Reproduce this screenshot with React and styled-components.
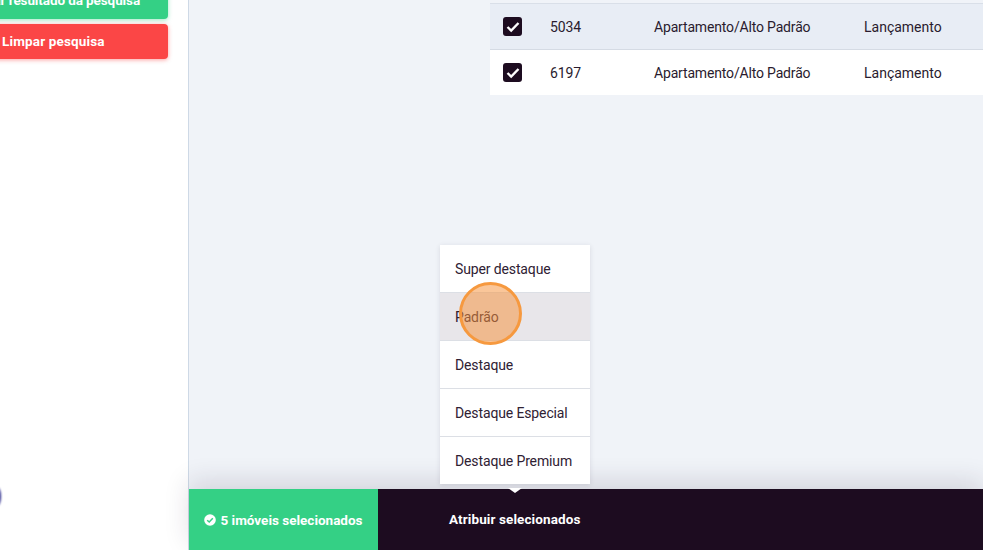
import React from "react";
import styled, { createGlobalStyle } from "styled-components";

const Global = createGlobalStyle`
  html, body { margin: 0; padding: 0; background: #f0f3f8; }
  * { box-sizing: border-box; }
`;
const Page = styled.div`
  width: 983px; height: 550px; display: flex; overflow: hidden; position: relative;
  font-family: Roboto, "Liberation Sans", sans-serif; color: #1d0c20; background: #f0f3f8;
`;
const Sidebar = styled.aside`
  width: 189px; flex: none; background: #fff; border-right: 1px solid #ced9e6;
  padding: 0 20px 0 0; display: flex; flex-direction: column; gap: 5px; position: relative; overflow: hidden;
`;
const SideButton = styled.button`
  width: ${p => p.$w}px; margin-left: ${p => 168 - p.$w}px; margin-top: ${p => p.$mt || 0}px; height: 35px; border: 0; border-radius: 4px;
  background: ${p => p.$bg}; color: #fff; font: 700 13.5px Roboto, sans-serif; text-align: left;
  letter-spacing: ${p => p.$ls || "0"}; padding: ${p => p.$pad}; box-shadow: 0 1px 4px ${p => p.$shadow};
  white-space: nowrap; flex: none; overflow: hidden;
`;
const Main = styled.main`
  flex: 1; display: flex; flex-direction: column; position: relative; min-width: 0;
`;
const Content = styled.section`
  flex: 1; padding: 3px 0 0 301px; min-height: 0;
`;
const Table = styled.div`
  border-top: 1px solid #d9dfe8; display: flex; flex-direction: column;
`;
const Row = styled.div`
  height: ${p => p.$h}px; display: grid; grid-template-columns: 60px 104px 210px 1fr; align-items: center;
  background: ${p => p.$bg}; border-bottom: ${p => p.$line ? "1px solid #d5dbe4" : "0"};
  font-size: 14px; color: #2a1b2e;
`;
const CheckCell = styled.span`
  padding-left: 13px; display: flex;
`;
const Check = styled.span`
  width: 19px; height: 19px; border-radius: 3px; background: #1d0c20; display: flex;
  align-items: center; justify-content: center;
`;
const Cell = styled.span`
  letter-spacing: ${p => p.$ls || "0"}; white-space: nowrap;
`;
const Bar = styled.footer`
  height: 61px; flex: none; display: flex; background: #1d0c20; position: relative;
  box-shadow: 0 -8px 26px rgba(40, 30, 60, .14);
`;
const Count = styled.div`
  width: 189px; background: #34d085; color: #fff; display: flex; align-items: center;
  justify-content: center; gap: 4px; font-size: 13.5px; font-weight: 700; padding-top: 1px;
`;
const Assign = styled.div`
  color: #fff; font-size: 13.5px; font-weight: 700; margin-left: 71px; display: flex; align-items: center;
  padding-bottom: 2px; letter-spacing: 0.1px;
`;
const Menu = styled.ul`
  position: absolute; left: 251px; top: 245px; width: 150px; margin: 0; padding: 0; list-style: none;
  background: #fff; box-shadow: 0 1px 5px rgba(40, 30, 60, .12); z-index: 3;
`;
const MenuItem = styled.li`
  height: ${p => p.$last ? 47 : 48}px; padding: 0 0 0 15px; display: flex; align-items: center; font-size: 14px;
  letter-spacing: -0.13px;
  background: ${p => p.$active ? "#e8e6ea" : "#fff"};
  border-bottom: ${p => p.$last ? "0" : "1px solid #dcdfe5"};
  color: #2f2133;
`;
const Arrow = styled.span`
  position: absolute; left: 319px; top: 488px; width: 0; height: 0; z-index: 4;
  border-left: 7px solid transparent; border-right: 7px solid transparent; border-top: 5px solid #fff;
`;
const Pointer = styled.span`
  position: absolute; left: 270px; top: 282px; width: 63px; height: 63px; border-radius: 50%;
  background: rgba(246, 146, 60, .52); border: 3px solid #f6993f; z-index: 5;
`;
const Blob = styled.span`
  position: absolute; left: -7px; top: 487px; width: 8px; height: 19px; border-radius: 50%;
  background: #2b2a8c; filter: blur(1px);
`;

const rows = [
  { id: "5034", bg: "#e8edf5", line: true, h: 46 },
  { id: "6197", bg: "#fff", line: false, h: 45 },
];
const options = ["Super destaque", "Padrão", "Destaque", "Destaque Especial", "Destaque Premium"];

export default function App() {
  return (
    <Page>
      <Global />
      <Sidebar>
        <SideButton $w={228} $mt={-16} $ls="-0.1px" $bg="#34d085" $shadow="rgba(52,208,133,.5)" $pad="0 0 4px 28px">
          Salvar resultado da pesquisa
        </SideButton>
        <SideButton $w={180} $ls="0.15px" $bg="#fb4646" $shadow="rgba(251,70,70,.5)" $pad="0 0 2px 14px">
          Limpar pesquisa
        </SideButton>
        <Blob />
      </Sidebar>
      <Main>
        <Content>
          <Table>
            {rows.map(r => (
              <Row key={r.id} $bg={r.bg} $line={r.line} $h={r.h}>
                <CheckCell>
                  <Check>
                    <svg width="14" height="12" viewBox="0 0 14 12" fill="none">
                      <path d="M1.5 6 L5.2 9.6 L12.5 2" stroke="#fff" strokeWidth="2.4" />
                    </svg>
                  </Check>
                </CheckCell>
                <Cell $ls="-0.1px">{r.id}</Cell>
                <Cell $ls="-0.17px">Apartamento/Alto Padrão</Cell>
                <Cell>Lançamento</Cell>
              </Row>
            ))}
          </Table>
        </Content>
        <Bar>
          <Count>
            <svg width="12" height="12" viewBox="0 0 12 12">
              <circle cx="6" cy="6" r="5.8" fill="#fff" />
              <path d="M3.2 6.2 L5.2 8 L8.8 4.3" stroke="#34d085" strokeWidth="1.5" fill="none" />
            </svg>
            5 imóveis selecionados
          </Count>
          <Assign>Atribuir selecionados</Assign>
        </Bar>
        <Menu>
          {options.map((o, i) => (
            <MenuItem key={o} $active={i === 1} $last={i === options.length - 1}>{o}</MenuItem>
          ))}
        </Menu>
        <Arrow />
        <Pointer />
      </Main>
    </Page>
  );
}
